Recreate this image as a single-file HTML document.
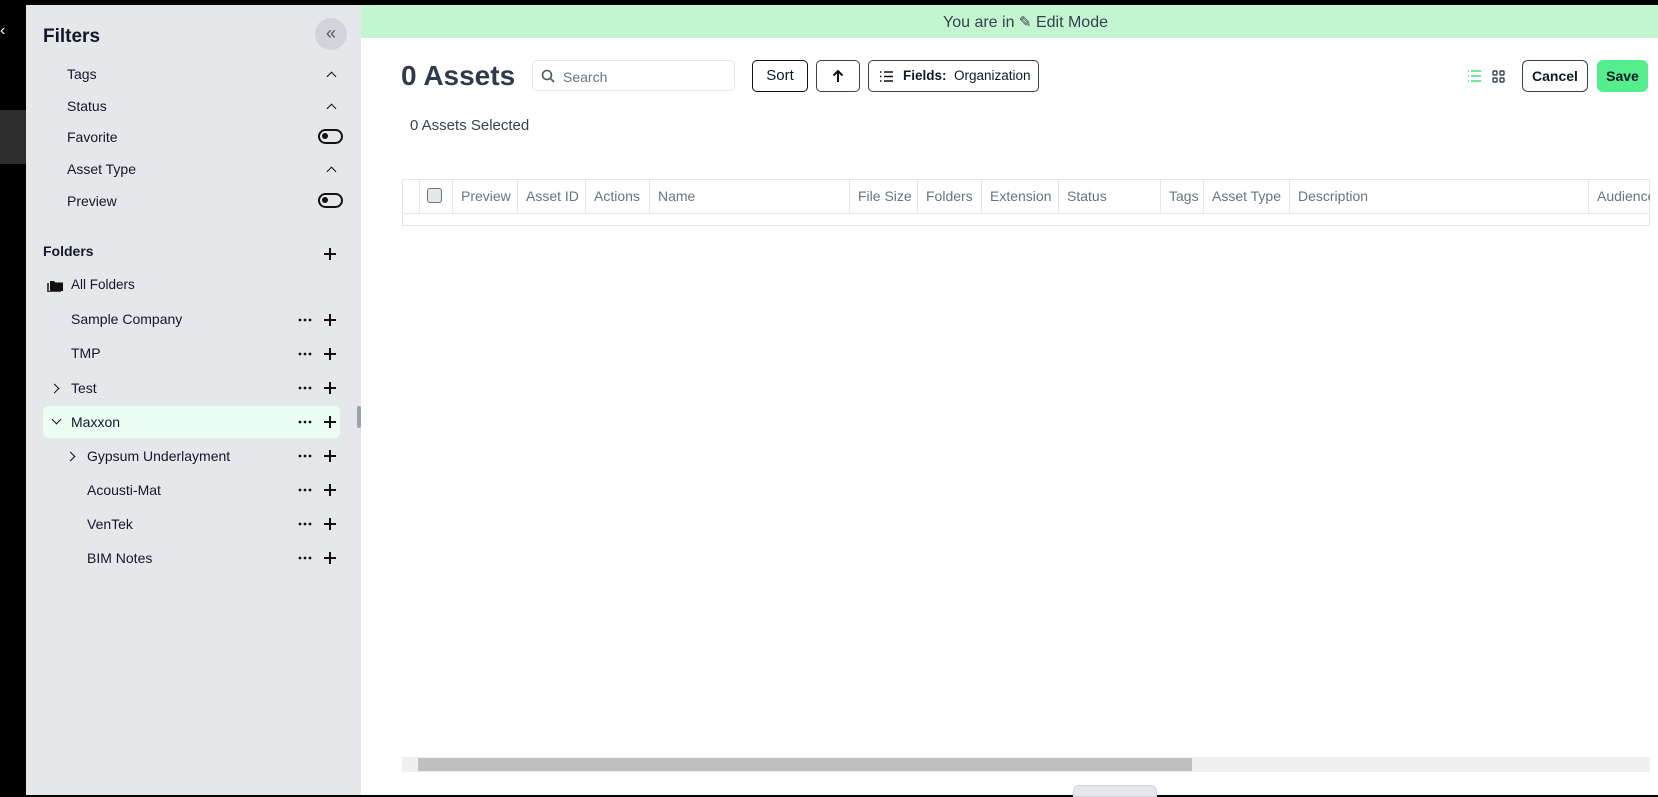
<!DOCTYPE html>
<html><head><meta charset="utf-8"><style>
*{box-sizing:border-box;margin:0;padding:0}
body{width:1658px;height:795px;overflow:hidden;background:#000;font-family:"Liberation Sans",sans-serif;position:relative;color:#111827}
.abs{position:absolute}
#side{left:26px;top:5px;width:335px;height:790px;background:#e5e7eb}
#main{left:361px;top:5px;width:1297px;height:790px;background:#fff}
.t{position:absolute;font-size:14px;white-space:nowrap;line-height:16px}
.chev{position:absolute;width:7px;height:7px;border-left:1.6px solid #111;border-top:1.6px solid #111;transform:rotate(45deg)}
.tog{position:absolute;width:25px;height:15px;border:2.5px solid #111;border-radius:8px}
.tog:after{content:"";position:absolute;left:2px;top:2px;width:6px;height:6px;border-radius:50%;background:#111}
.dots{position:absolute;width:14px;height:4px}
.plus{position:absolute;width:12px;height:12px}
.plus:before{content:"";position:absolute;left:5px;top:0;width:2px;height:12px;background:#111}
.plus:after{content:"";position:absolute;left:0;top:5px;width:12px;height:2px;background:#111}
.btn{position:absolute;top:60px;height:32px;border:1px solid #111;border-radius:5px;background:#fff}
.th{position:absolute;top:179px;height:34px;border-left:1px solid #e5e7eb;font-size:14px;color:#6b7280;line-height:34px;padding-left:8px;white-space:nowrap}
</style></head><body>
<div class="abs" style="left:0;top:110px;width:26px;height:54px;background:#2d2d2d"></div>
<div class="abs" style="left:0;top:22px;color:#fff;font-size:16px">‹</div>
<div id="side" class="abs"></div>
<div id="main" class="abs"></div>
<svg width="0" height="0" style="position:absolute"><defs><g id="d"><circle cx="2" cy="2" r="1.4" fill="#111"/><circle cx="7" cy="2" r="1.4" fill="#111"/><circle cx="12" cy="2" r="1.4" fill="#111"/></g></defs></svg>
<!-- sidebar -->
<div class="t" style="left:43px;top:27px;font-size:19px;font-weight:bold;line-height:20px">Filters</div>
<div class="abs" style="left:315px;top:18px;width:32px;height:32px;border-radius:50%;background:#d1d5db;color:#555;font-size:18px;text-align:center;line-height:30px">«</div>
<div class="t" style="left:67px;top:66px">Tags</div><div class="chev" style="left:328px;top:73px"></div>
<div class="t" style="left:67px;top:98px">Status</div><div class="chev" style="left:328px;top:105px"></div>
<div class="t" style="left:67px;top:129px">Favorite</div><div class="tog" style="left:318px;top:129px"></div>
<div class="t" style="left:67px;top:161px">Asset Type</div><div class="chev" style="left:328px;top:168px"></div>
<div class="t" style="left:67px;top:193px">Preview</div><div class="tog" style="left:318px;top:193px"></div>
<div class="t" style="left:43px;top:243px;font-weight:bold">Folders</div><div class="plus" style="left:324px;top:248px"></div>
<svg class="abs" style="left:47px;top:279px" width="17" height="13" viewBox="0 0 17 13"><path d="M3 2h4l1.5 1.5H16V12H3z" fill="#111"/><path d="M1 4v9h13" stroke="#111" stroke-width="1.5" fill="none"/></svg>
<div class="t" style="left:71px;top:277px;font-size:13.5px">All Folders</div>
<div class="abs" style="left:43px;top:406px;width:297px;height:32px;border-radius:5px;background:#ecfdf3"></div>
<div class="abs" style="left:357px;top:406px;width:4px;height:22px;background:#9ca3af;border-radius:2px"></div>
<div class="t" style="left:71px;top:311px">Sample Company</div>
<div class="t" style="left:71px;top:345px">TMP</div>
<div class="t" style="left:71px;top:380px">Test</div><div class="chev" style="left:51px;top:385px;transform:rotate(135deg)"></div>
<div class="t" style="left:71px;top:414px">Maxxon</div><div class="chev" style="left:53px;top:416px;transform:rotate(225deg)"></div>
<div class="t" style="left:87px;top:448px">Gypsum Underlayment</div><div class="chev" style="left:67px;top:453px;transform:rotate(135deg)"></div>
<div class="t" style="left:87px;top:482px">Acousti-Mat</div>
<div class="t" style="left:87px;top:516px">VenTek</div>
<div class="t" style="left:87px;top:550px">BIM Notes</div>
<svg class="dots" style="left:298px;top:318px"><use href="#d"/></svg><div class="plus" style="left:324px;top:314px"></div>
<svg class="dots" style="left:298px;top:352px"><use href="#d"/></svg><div class="plus" style="left:324px;top:348px"></div>
<svg class="dots" style="left:298px;top:386px"><use href="#d"/></svg><div class="plus" style="left:324px;top:382px"></div>
<svg class="dots" style="left:298px;top:420px"><use href="#d"/></svg><div class="plus" style="left:324px;top:416px"></div>
<svg class="dots" style="left:298px;top:454px"><use href="#d"/></svg><div class="plus" style="left:324px;top:450px"></div>
<svg class="dots" style="left:298px;top:488px"><use href="#d"/></svg><div class="plus" style="left:324px;top:484px"></div>
<svg class="dots" style="left:298px;top:522px"><use href="#d"/></svg><div class="plus" style="left:324px;top:518px"></div>
<svg class="dots" style="left:298px;top:556px"><use href="#d"/></svg><div class="plus" style="left:324px;top:552px"></div>
<!-- banner -->
<div class="abs" style="left:361px;top:5px;width:1297px;height:33px;background:#c3f6d0"></div>
<div class="t" style="left:943px;top:14px;font-size:16px;color:#374151;line-height:18px">You are in <span style="font-size:15px">✎</span> Edit Mode</div>
<!-- toolbar -->
<div class="t" style="left:401px;top:61px;font-size:28px;font-weight:bold;color:#2f3a4a;line-height:30px">0 Assets</div>
<div class="abs" style="left:532px;top:60px;width:203px;height:31px;border:1px solid #e5e7eb;border-radius:5px"></div>
<svg class="abs" style="left:541px;top:69px" width="14" height="14" viewBox="0 0 14 14"><circle cx="6" cy="6" r="4.5" stroke="#4b5563" stroke-width="1.6" fill="none"/><path d="M9.5 9.5L13 13" stroke="#4b5563" stroke-width="1.6"/></svg>
<div class="t" style="left:563px;top:69px;color:#6b7280">Search</div>
<div class="btn" style="left:752px;width:56px;font-size:15px;text-align:center;line-height:30px">Sort</div>
<div class="btn" style="left:816px;width:44px;border-color:#374151"></div>
<svg class="abs" style="left:832px;top:69px" width="12" height="14" viewBox="0 0 12 14"><path d="M6 13V2M1.5 6.5L6 2l4.5 4.5" stroke="#111" stroke-width="2" fill="none"/></svg>
<div class="btn" style="left:868px;width:171px;border-color:#374151;font-size:13.5px;line-height:30px;padding-left:34px"><b>Fields:</b>&nbsp; Organization</div>
<svg class="abs" style="left:880px;top:71px" width="13" height="11" viewBox="0 0 13 11"><path d="M0 1h1.5M0 5.5h1.5M0 10h1.5M4 1h9M4 5.5h9M4 10h9" stroke="#111" stroke-width="1.4"/></svg>
<svg class="abs" style="left:1467px;top:70px" width="14" height="12" viewBox="0 0 14 12"><path d="M1 1h1M1 6h1M1 11h1M4 1h10M4 6h10M4 11h10" stroke="#4ade80" stroke-width="1.5"/></svg>
<svg class="abs" style="left:1492px;top:70px" width="13" height="13" viewBox="0 0 13 13"><g fill="none" stroke="#374151" stroke-width="1.4"><rect x="1" y="1" width="4" height="4" rx="1"/><rect x="8" y="1" width="4" height="4" rx="1"/><rect x="1" y="8" width="4" height="4" rx="1"/><rect x="8" y="8" width="4" height="4" rx="1"/></g></svg>
<div class="btn" style="left:1522px;width:66px;border-color:#374151;border-radius:6px;font-weight:bold;font-size:14px;text-align:center;line-height:30px">Cancel</div>
<div class="btn" style="left:1597px;width:51px;border:none;border-radius:6px;background:#55ee8f;font-weight:bold;font-size:14px;text-align:center;line-height:32px">Save</div>
<div class="t" style="left:410px;top:118px;font-size:15px;color:#374151">0 Assets Selected</div>
<!-- table -->
<div class="abs" style="left:402px;top:179px;width:1248px;height:47px;border:1px solid #e5e7eb"></div>
<div class="abs" style="left:402px;top:213px;width:1248px;height:1px;background:#e5e7eb"></div>
<div class="th" style="left:419px;width:33px"></div>
<div class="abs" style="left:427px;top:188px;width:15px;height:15px;border:1.5px solid #6b7280;border-radius:3px;background:#e5e7eb"></div>
<div class="th" style="left:452px">Preview</div>
<div class="th" style="left:517px">Asset ID</div>
<div class="th" style="left:585px">Actions</div>
<div class="th" style="left:649px">Name</div>
<div class="th" style="left:849px">File Size</div>
<div class="th" style="left:917px">Folders</div>
<div class="th" style="left:981px">Extension</div>
<div class="th" style="left:1058px">Status</div>
<div class="th" style="left:1160px">Tags</div>
<div class="th" style="left:1203px">Asset Type</div>
<div class="th" style="left:1289px">Description</div>
<div class="th" style="left:1588px;width:62px;overflow:hidden">Audience</div>
<!-- scrollbar -->
<div class="abs" style="left:402px;top:757px;width:1248px;height:15px;background:#f0f0f0"></div>
<div class="abs" style="left:418px;top:758px;width:774px;height:13px;background:#c0c0c0"></div>
<div class="abs" style="left:1073px;top:785px;width:84px;height:12px;background:#e5e7eb;border:1px solid #d1d5db;border-radius:6px 6px 0 0"></div>
</body></html>
